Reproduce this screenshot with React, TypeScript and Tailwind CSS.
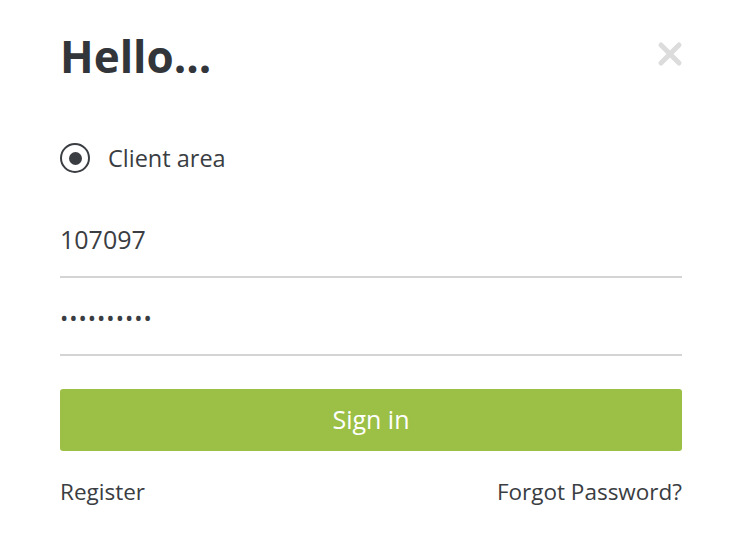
import React, { useState } from 'react';

const App: React.FC = () => {
  const [login, setLogin] = useState('107097');
  const [password, setPassword] = useState('1234567890');

  return (
    <div className="min-h-[545px] w-full bg-white font-['Open_Sans',sans-serif] text-[#3a3d42]">
      <div className="pl-[60px] pr-[57px] pt-[26px]">
        {/* Header */}
        <div className="flex items-start justify-between">
          <h1 className="text-[44px] font-bold leading-[60px] text-[#32353a]">Hello...</h1>
          <button className="mt-[15px] mr-[-1px] text-[#dcdcdc]" aria-label="Close">
            <svg width="26" height="26" viewBox="0 0 26 26">
              <path d="M4 4 L22 22 M22 4 L4 22" stroke="currentColor" strokeWidth="5" strokeLinecap="round" />
            </svg>
          </button>
        </div>

        {/* Account type */}
        <label className="mt-[57px] flex items-center">
          <span className="flex h-[30px] w-[30px] items-center justify-center rounded-full border-2 border-[#3a3d42]">
            <span className="h-[13px] w-[13px] rounded-full bg-[#3a3d42]" />
          </span>
          <span className="ml-[18px] text-[23.5px] leading-[30px]">Client area</span>
        </label>

        {/* Fields */}
        <div className="mt-[55px]">
          <input
            value={login}
            onChange={e => setLogin(e.target.value)}
            className="block h-[50px] w-full border-b-2 border-[#d4d4d4] bg-transparent pb-[26px] text-[25px] leading-none text-[#3a3d42] outline-none"
          />
          <input
            type="password"
            value={password}
            onChange={e => setPassword(e.target.value)}
            className="mt-[28px] block h-[50px] w-full border-b-2 border-[#d4d4d4] bg-transparent pb-[26px] text-[22px] leading-none tracking-[1px] text-[#3a3d42] outline-none"
          />
        </div>

        <button className="mt-[33px] flex h-[62px] w-full items-center justify-center rounded-[3px] bg-[#9bc045] text-[25px] text-white">
          Sign in
        </button>

        <div className="mt-[26px] flex items-center justify-between text-[22.5px] leading-[30px]">
          <a href="#" className="text-[#3a3d42]">Register</a>
          <a href="#" className="text-[#3a3d42]">Forgot Password?</a>
        </div>
      </div>
    </div>
  );
};

export default App;
